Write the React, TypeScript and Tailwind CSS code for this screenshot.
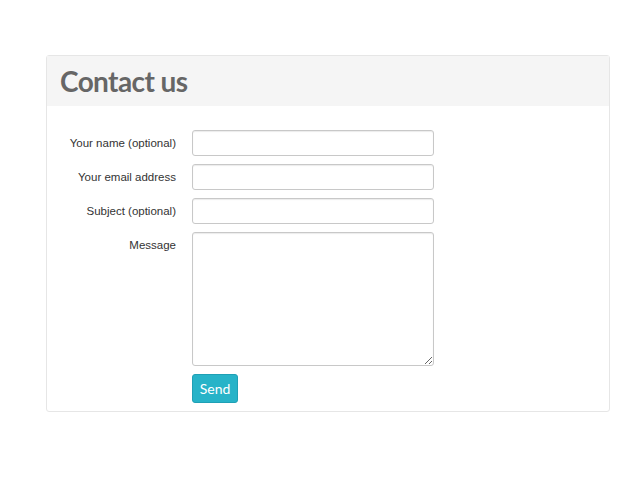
function Field({ label, tall }: { label: string; tall?: boolean }) {
  return (
    <div className="flex items-start">
      <label className="w-[130px] shrink-0 pr-[16px] pt-[5px] text-right text-[11.5px] leading-[16px] text-[#333]">
        {label}
      </label>
      {tall ? (
        <textarea className="h-[134px] w-[242px] resize-y rounded-[3px] border border-[#c8c8c8] shadow-[inset_0_1px_1px_rgba(0,0,0,0.08)] outline-none" />
      ) : (
        <input className="h-[26px] w-[242px] rounded-[3px] border border-[#c8c8c8] shadow-[inset_0_1px_1px_rgba(0,0,0,0.08)] outline-none" />
      )}
    </div>
  );
}

export default function App() {
  return (
    <div className="min-h-[480px] bg-white pt-[55px] pl-[46px] font-['Liberation_Sans',Arial,sans-serif]">
      <div className="w-[564px] rounded-[3px] border border-[#e6e6e6] bg-white">
        {/* header */}
        <div className="h-[50px] bg-[#f5f5f5] pl-[13px] pt-[7px]">
          <h1 className="font-['Lato',sans-serif] text-[28px] font-bold leading-[36px] tracking-[-0.6px] text-[#666]">
            Contact us
          </h1>
        </div>

        {/* form */}
        <div className="flex flex-col gap-[8px] pt-[24px] pb-[8px] pl-[15px]">
          <Field label="Your name (optional)" />
          <Field label="Your email address" />
          <Field label="Subject (optional)" />
          <Field label="Message" tall />
          <div className="pl-[130px]">
            <button className="h-[29px] w-[46px] rounded-[3px] border border-[#1fa0b5] bg-[#27b3c8] font-['Lato',sans-serif] text-[14px] text-white">
              Send
            </button>
          </div>
        </div>
      </div>
    </div>
  );
}
